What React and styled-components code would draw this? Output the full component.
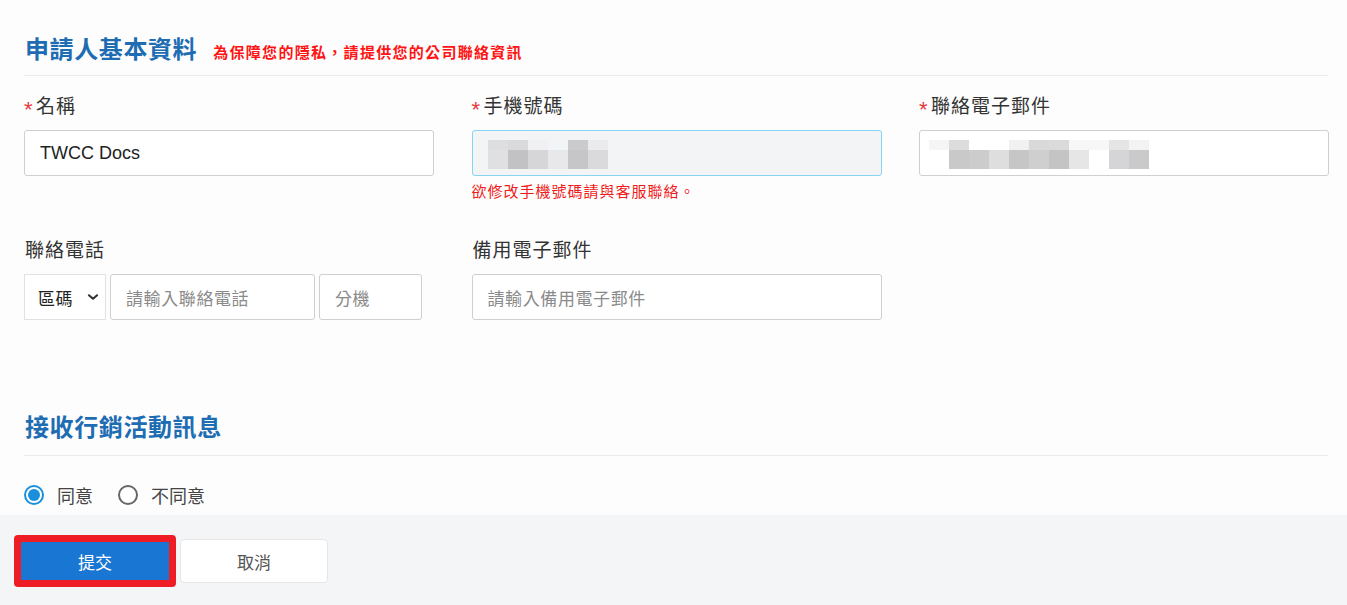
import React from 'react';
import styled, { createGlobalStyle } from 'styled-components';

const GlobalStyle = createGlobalStyle`
  html, body {
    margin: 0;
    padding: 0;
    background: #fdfdfd;
    font-family: "Liberation Sans", "Noto Sans CJK TC", sans-serif;
    color: #333;
  }
  * { box-sizing: border-box; }
`;

const Page = styled.div`
  width: 1347px;
  height: 605px;
  display: flex;
  flex-direction: column;
  overflow: hidden;
`;

const Body = styled.div`
  padding: 35px 19px 0 24px;
`;

const SectionHead = styled.div`
  display: flex;
  align-items: baseline;
  gap: 16px;
  padding: 0 0 ${({ pb }) => pb || 10}px 1px;
  border-bottom: 1px solid #ebebeb;
`;

const Title = styled.h2`
  margin: 0;
  font-size: 24px;
  line-height: 30px;
  font-weight: 700;
  color: #1e6db3;
  letter-spacing: 0.6px;
`;

const Note = styled.span`
  font-size: 15px;
  font-weight: 700;
  color: #ff1414;
  letter-spacing: 1.3px;
`;

const Grid = styled.div`
  display: grid;
  grid-template-columns: repeat(3, 410px);
  column-gap: 37.5px;
  row-gap: 35px;
  margin-top: 17px;
`;

const Field = styled.div`
  display: flex;
  flex-direction: column;
`;

const Label = styled.label`
  display: flex;
  align-items: center;
  font-size: 19px;
  line-height: 28px;
  color: #333;
  margin-bottom: 9px;
  letter-spacing: 1px;
  padding-left: ${({ plain }) => (plain ? 1 : 0)}px;
`;

const Star = styled.span`
  color: #e4393c;
  font-size: 22px;
  line-height: 1;
  width: 12px;
  position: relative;
  top: 3px;
`;

const Box = styled.div`
  height: 46px;
  width: ${({ w }) => (w ? `${w}px` : '100%')};
  border: 1px solid ${({ locked }) => (locked ? '#86d3f2' : '#cfcfcf')};
  border-radius: 3px;
  background: ${({ locked }) => (locked ? '#f3f4f6' : '#fff')};
  display: flex;
  align-items: center;
  padding-left: 15px;
  font-size: 18px;
  color: #222;
  flex-shrink: 0;
`;

const Placeholder = styled.span`
  font-size: 17px;
  letter-spacing: 0.6px;
  color: #8a8a8a;
`;

const Mosaic = styled.div`
  display: grid;
  grid-template-columns: repeat(${({ cols }) => cols}, 20px);
  grid-template-rows: 10px 19px;
  margin-left: ${({ offset }) => offset}px;
  margin-top: 2px;
`;

const Cell = styled.span`
  background: ${({ c }) => c};
`;

const Help = styled.div`
  margin-top: 6px;
  font-size: 15px;
  line-height: 20px;
  color: #f01c1c;
  letter-spacing: 1px;
`;

const PhoneRow = styled.div`
  display: flex;
  gap: 4px;
`;

const Select = styled.div`
  height: 46px;
  width: 82px;
  border: 1px solid #e2e2e2;
  background: #fff;
  display: flex;
  align-items: center;
  justify-content: space-between;
  padding: 0 5px 0 13px;
  font-size: 17px;
  color: #222;
  letter-spacing: 0.5px;
`;

const MarketingHead = styled.div`
  margin-top: 93px;
`;

const Radios = styled.div`
  display: flex;
  align-items: center;
  gap: 25px;
  margin-top: 27px;
  height: 24px;
`;

const Radio = styled.label`
  display: flex;
  align-items: center;
  gap: 13px;
  font-size: 18px;
  color: #444;
`;

const Dot = styled.span`
  width: 20px;
  height: 20px;
  border-radius: 50%;
  border: 2px solid ${({ on }) => (on ? '#1a8fdc' : '#666')};
  display: flex;
  align-items: center;
  justify-content: center;
  background: #fff;
  &::after {
    content: '';
    width: 12px;
    height: 12px;
    border-radius: 50%;
    background: ${({ on }) => (on ? '#1a8fdc' : 'transparent')};
  }
`;

const Footer = styled.div`
  margin-top: 8px;
  flex: 1;
  background: #f4f5f7;
  padding: 20px 0 0 14px;
  display: flex;
  align-items: flex-start;
  gap: 4px;
`;

const Button = styled.button`
  font-family: inherit;
  font-size: 17px;
  cursor: pointer;
  border-radius: 4px;
  ${({ primary }) =>
    primary
      ? `
    width: 162px;
    height: 52px;
    background: #1976d2;
    border: 7px solid #ee1c25;
    color: #fff;
  `
      : `
    width: 148px;
    height: 44px;
    margin-top: 4px;
    background: #fff;
    border: 1px solid #e6e6e6;
    color: #555;
  `}
`;

const phoneBlur = [
  ['#dedee0', '#dadadc', '#f0f0f2', '#f2f5f7', '#cbcbcd', '#ebebed'],
  ['#e0e0e2', '#c2c2c4', '#d6d6d8', '#e8e8ea', '#c6c6c8', '#dadadc'],
];

const mailBlur = [
  ['#f5f5f5', '#dcdcdc', '#fff', '#fff', '#f1f1f1', '#d9d9d9', '#dadada', '#f7f7f7', '#f7f7f7', '#e5e5e5', '#f3f3f3'],
  ['#fff', '#c9c9c9', '#cccccc', '#dedede', '#c6c6c6', '#cfcfcf', '#c4c4c4', '#e6e6e6', '#fff', '#d5d5d8', '#cacaca'],
];

const Blur = ({ rows, offset }) => (
  <Mosaic cols={rows[0].length} offset={offset}>
    {rows.flat().map((c, i) => (
      <Cell key={i} c={c} />
    ))}
  </Mosaic>
);

const Chevron = () => (
  <svg width="14" height="14" viewBox="0 0 24 24" fill="none" stroke="#333" strokeWidth="3.6" strokeLinecap="round" strokeLinejoin="round">
    <path d="m5 9 7 6 7-6" />
  </svg>
);

export default function App() {
  return (
    <>
      <GlobalStyle />
      <Page>
        <Body>
          <SectionHead>
            <Title>申請人基本資料</Title>
            <Note>為保障您的隱私，請提供您的公司聯絡資訊</Note>
          </SectionHead>

          <Grid>
            <Field>
              <Label><Star>*</Star>名稱</Label>
              <Box>TWCC Docs</Box>
            </Field>
            <Field>
              <Label><Star>*</Star>手機號碼</Label>
              <Box locked><Blur rows={phoneBlur} offset={0} /></Box>
              <Help>欲修改手機號碼請與客服聯絡。</Help>
            </Field>
            <Field>
              <Label><Star>*</Star>聯絡電子郵件</Label>
              <Box><Blur rows={mailBlur} offset={-6} /></Box>
            </Field>

            <Field>
              <Label plain>聯絡電話</Label>
              <PhoneRow>
                <Select>區碼<Chevron /></Select>
                <Box w={205}><Placeholder>請輸入聯絡電話</Placeholder></Box>
                <Box w={103}><Placeholder>分機</Placeholder></Box>
              </PhoneRow>
            </Field>
            <Field>
              <Label plain>備用電子郵件</Label>
              <Box><Placeholder>請輸入備用電子郵件</Placeholder></Box>
            </Field>
          </Grid>

          <MarketingHead>
            <SectionHead pb={12}>
              <Title>接收行銷活動訊息</Title>
            </SectionHead>
          </MarketingHead>

          <Radios>
            <Radio><Dot on />同意</Radio>
            <Radio><Dot />不同意</Radio>
          </Radios>
        </Body>

        <Footer>
          <Button primary>提交</Button>
          <Button>取消</Button>
        </Footer>
      </Page>
    </>
  );
}
